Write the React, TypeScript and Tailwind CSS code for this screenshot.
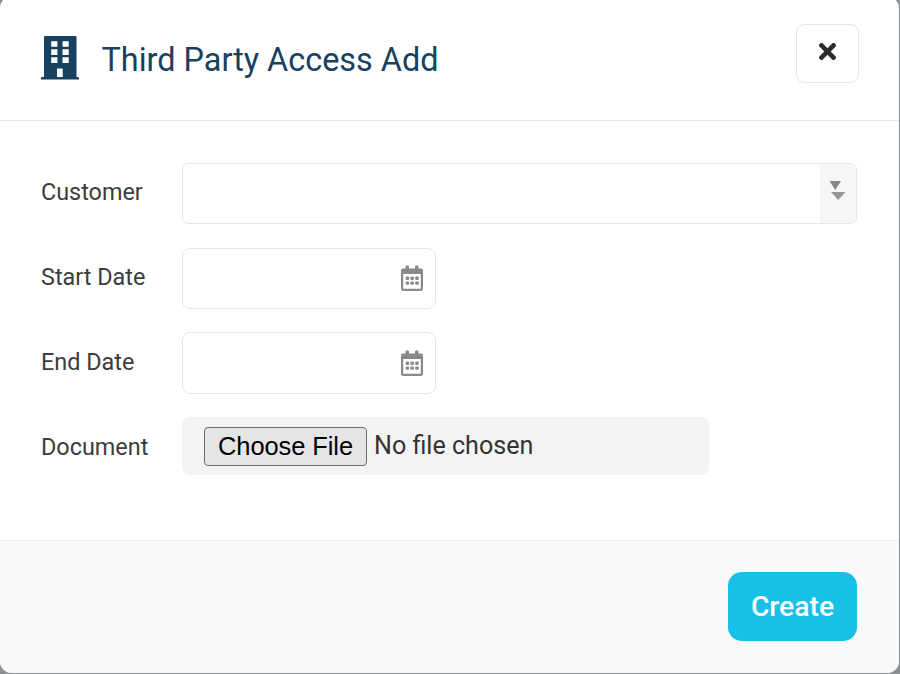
import type { ReactNode } from "react";
import { FaTimes } from "react-icons/fa";

function BuildingIcon() {
  return (
    <svg width="38" height="44" viewBox="0 0 38 44" fill="currentColor">
      <path
        fillRule="evenodd"
        d="M4 0h30.500a1 1 0 0 1 1 1v40h1.500a1 1 0 0 1 1 1v1.500H0V42a1 1 0 0 1 1-1h2V1a1 1 0 0 1 1-1ZM10.200 5.200v5.600h6.200V5.200ZM21.500 5.200v5.600h6.200V5.200ZM10.200 13.300v5.600h6.200v-5.600ZM21.500 13.300v5.600h6.200v-5.600ZM10.200 21.300v5.600h6.200v-5.600ZM21.500 21.300v5.600h6.200v-5.600ZM16 32.500V41h5.700v-8.500Z"
      />
    </svg>
  );
}

function CalendarIcon() {
  return (
    <svg width="24" height="27" viewBox="0 0 24 27" fill="#8a8a8a">
      <path
        fillRule="evenodd"
        d="M3 3.500h18a2 2 0 0 1 2 2V24a2 2 0 0 1-2 2H3a2 2 0 0 1-2-2V5.500a2 2 0 0 1 2-2ZM3.200 9v14.700h17.600V9Z"
      />
      <rect x="5.500" y="0.500" width="3.500" height="5" rx="1.200" />
      <rect x="15" y="0.500" width="3.500" height="5" rx="1.200" />
      {[5.6, 10.4, 15.2].map((x) => (
        <g key={x}>
          <rect x={x} y="11.500" width="3.600" height="3.400" rx="1.200" />
          <rect x={x} y="16.400" width="3.600" height="3.400" rx="1.200" />
        </g>
      ))}
    </svg>
  );
}

function Field({ label, className, children }: { label: string; className: string; children: ReactNode }) {
  return (
    <div className={`flex items-center ${className}`}>
      <span className="-mt-[3px] w-[140.500px] shrink-0 whitespace-nowrap text-[23.400px] leading-7 text-[#3c3c3c]">{label}</span>
      {children}
    </div>
  );
}

function DateInput() {
  return (
    <div className="flex h-full w-[254px] items-center justify-end rounded-lg border border-[#e6e6e6] bg-white pr-[11px]">
      <CalendarIcon />
    </div>
  );
}

export default function App() {
  return (
    <div className="h-[674px] w-[900px] overflow-hidden bg-[#8b9095] font-['Roboto',sans-serif]">
      <div className="-mt-1 flex h-[677px] w-[899px] flex-col overflow-hidden rounded-xl bg-white">
        <header className="flex h-[125px] shrink-0 items-start justify-between border-b border-[#e6e6e6] pl-[41px] pr-10 pt-7">
          <div className="flex items-start pt-3 text-[#17415f]">
            <BuildingIcon />
            <h1 className="ml-[22.500px] pt-[3px] text-[32.400px] leading-[42px]">Third Party Access Add</h1>
          </div>
          <button className="flex h-[59px] w-[63px] items-center justify-center rounded-lg border border-[#e6e6e6] pb-[4px]">
            <FaTimes size={25} color="#2b2b2b" />
          </button>
        </header>

        <main className="h-[419px] shrink-0 pl-[41px] pt-[42px]">
          <Field label="Customer" className="h-[61px]">
            <div className="flex h-full w-[675.500px] justify-end overflow-hidden rounded-md border border-[#e6e6e6] bg-white">
              <div className="w-[36px] bg-[#f6f6f6]">
                <svg width="36" height="59" viewBox="0 0 36 59">
                  <path d="M9.500 17h11.500l-5.750 9z" fill="#858585" />
                  <path d="M11 28h14.500l-7.250 8z" fill="#969696" />
                </svg>
              </div>
            </div>
          </Field>
          <Field label="Start Date" className="mt-6 h-[61px]">
            <DateInput />
          </Field>
          <Field label="End Date" className="mt-[23px] h-[62px]">
            <DateInput />
          </Field>
          <div className="mt-[23px] flex h-[58px] items-center">
            <span className="w-[140.500px] shrink-0 pt-px text-[23.400px] leading-7 text-[#3c3c3c]">Document</span>
            <div className="flex h-full w-[527.500px] items-center rounded-lg bg-[#f3f3f3] pl-[22.500px]">
              <button className="h-[39px] w-[163px] rounded-[4px] border border-[#6b6b6b] bg-[#e5e5e5] pt-[2px] font-['Liberation_Sans',sans-serif] text-[25.500px] leading-none tracking-[-0.1px] text-black">
                Choose File
              </button>
              <span className="ml-[7px] text-[25.100px] leading-7 text-[#333333]">No file chosen</span>
            </div>
          </div>
        </main>

        <footer className="flex grow items-start justify-end border-t border-[#ebebeb] bg-[#f9f9f9] pr-[42px] pt-[31px]">
          <button className="h-[69px] w-[129px] rounded-[14px] bg-[#18bfe6] pt-[2px] text-[28.300px] font-medium text-white">
            Create
          </button>
        </footer>
      </div>
    </div>
  );
}
